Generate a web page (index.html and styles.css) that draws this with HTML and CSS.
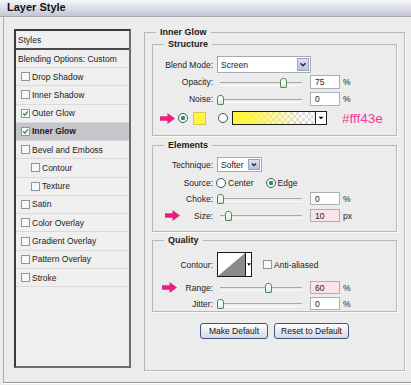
FILE: index.html
```html
<!DOCTYPE html>
<html lang="en">

<head>
    <meta charset="UTF-8">
    <meta name="viewport" content="width=device-width, initial-scale=1.0">
    <title>Layer Style</title>
    <link rel="stylesheet" href="styles.css">
</head>

<body>

    <div class="titlebar">Layer Style</div>

    <div class="dialog">

        <div class="sidebar">
            <ul class="styles-list">
                <li class="head">Styles</li>
                <li class="blend">Blending Options: Custom</li>
                <li><span class="box"></span>Drop Shadow</li>
                <li><span class="box"></span>Inner Shadow</li>
                <li><span class="box"><svg viewBox="0 0 9 9"><path d="M1.5 4.3 L3.6 6.6 L7.6 1.8" /></svg></span>Outer Glow</li>
                <li class="selected"><span class="box"><svg viewBox="0 0 9 9"><path d="M1.5 4.3 L3.6 6.6 L7.6 1.8" /></svg></span>Inner Glow</li>
                <li><span class="box"></span>Bevel and Emboss</li>
                <li class="sub"><span class="box"></span>Contour</li>
                <li class="sub"><span class="box"></span>Texture</li>
                <li><span class="box"></span>Satin</li>
                <li><span class="box"></span>Color Overlay</li>
                <li><span class="box"></span>Gradient Overlay</li>
                <li><span class="box"></span>Pattern Overlay</li>
                <li><span class="box"></span>Stroke</li>
            </ul>
        </div>

        <div class="main">
            <fieldset class="group outer">
                <legend>Inner Glow</legend>

                <!-- Structure -->
                <fieldset class="group structure">
                    <legend>Structure</legend>

                    <div class="row row-select">
                        <span class="label">Blend Mode:</span>
                        <div class="select select-wide">
                            <span class="value">Screen</span>
                            <span class="drop"><svg viewBox="0 0 11 13"><path d="M2.5 5 L5.5 8 L8.5 5" /></svg></span>
                        </div>
                    </div>

                    <div class="row row-opacity">
                        <span class="label">Opacity:</span>
                        <div class="slider"><span class="thumb" style="left: 77%"></span></div>
                        <span class="num">75</span>
                        <span class="unit">%</span>
                    </div>

                    <div class="row row-noise">
                        <span class="label">Noise:</span>
                        <div class="slider"><span class="thumb" style="left: 0%"></span></div>
                        <span class="num">0</span>
                        <span class="unit">%</span>
                    </div>

                    <div class="row row-color">
                        <svg class="arrow" viewBox="0 0 15 11"><path d="M0 3.2 H7.5 V0 L15 5.5 L7.5 11 V7.8 H0 Z" /></svg>
                        <span class="radio checked"></span>
                        <span class="swatch"></span>
                        <span class="radio radio-gap"></span>
                        <div class="gradient">
                            <span class="ramp"></span>
                            <span class="gdrop"><svg viewBox="0 0 7 4"><path d="M0.5 0.5 H6.5 L3.5 3.5 Z" /></svg></span>
                        </div>
                        <span class="hex">#fff43e</span>
                    </div>
                </fieldset>

                <!-- Elements -->
                <fieldset class="group elements">
                    <legend>Elements</legend>

                    <div class="row row-technique">
                        <span class="label">Technique:</span>
                        <div class="select select-small">
                            <span class="value">Softer</span>
                            <span class="drop"><svg viewBox="0 0 11 13"><path d="M2.5 5 L5.5 8 L8.5 5" /></svg></span>
                        </div>
                    </div>

                    <div class="row row-source">
                        <span class="label">Source:</span>
                        <span class="radio"></span>
                        <span class="opt">Center</span>
                        <span class="radio checked radio-edge"></span>
                        <span class="opt">Edge</span>
                    </div>

                    <div class="row row-choke">
                        <span class="label">Choke:</span>
                        <div class="slider"><span class="thumb" style="left: 0%"></span></div>
                        <span class="num">0</span>
                        <span class="unit">%</span>
                    </div>

                    <div class="row row-size">
                        <span class="label">
                            <svg class="arrow arrow-size" viewBox="0 0 15 11"><path d="M0 3.2 H7.5 V0 L15 5.5 L7.5 11 V7.8 H0 Z" /></svg>
                            Size:
                        </span>
                        <div class="slider"><span class="thumb" style="left: 10%"></span></div>
                        <span class="num pink">10</span>
                        <span class="unit">px</span>
                    </div>
                </fieldset>

                <!-- Quality -->
                <fieldset class="group quality">
                    <legend>Quality</legend>

                    <div class="row row-contour">
                        <span class="label">Contour:</span>
                        <div class="contour">
                            <svg class="curve" viewBox="0 0 27 23" preserveAspectRatio="none"><polygon points="0,23 27,0 27,23" /></svg>
                            <span class="cdrop"><svg viewBox="0 0 5 3"><path d="M0 0 H5 L2.5 3 Z" /></svg></span>
                        </div>
                        <span class="box box-aa"></span>
                        <span class="opt">Anti-aliased</span>
                    </div>

                    <div class="row row-range">
                        <span class="label">
                            <svg class="arrow arrow-range" viewBox="0 0 15 11"><path d="M0 3.2 H7.5 V0 L15 5.5 L7.5 11 V7.8 H0 Z" /></svg>
                            Range:
                        </span>
                        <div class="slider"><span class="thumb" style="left: 59%"></span></div>
                        <span class="num pink">60</span>
                        <span class="unit">%</span>
                    </div>

                    <div class="row row-jitter">
                        <span class="label">Jitter:</span>
                        <div class="slider"><span class="thumb" style="left: 0%"></span></div>
                        <span class="num">0</span>
                        <span class="unit">%</span>
                    </div>
                </fieldset>

                <div class="buttons">
                    <button class="btn btn-make">Make Default</button>
                    <button class="btn btn-reset">Reset to Default</button>
                </div>
            </fieldset>
        </div>

    </div>

</body>

</html>
```

FILE: styles.css
```css
* {
    box-sizing: border-box;
}

body {
    margin: 0;
    width: 411px;
    height: 385px;
    overflow: hidden;
    background-color: #ececec;
    font-family: "Liberation Sans", Arial, sans-serif;
    font-size: 8.5px;
    color: #1c1c1c;
}

.titlebar {
    height: 17px;
    padding-left: 7px;
    border-bottom: 1px solid #a6a8b4;
    background: linear-gradient(#f7f7fa, #c2c5d4);
    font-size: 11px;
    font-weight: bold;
    line-height: 15px;
    color: #111;
}

.dialog {
    display: flex;
    height: 366px;
    margin-left: 3px;
    border-left: 1px solid #a9a9a9;
    border-bottom: 1px solid #9a9a9a;
    box-shadow: 0 1px 0 #fff;
}

/* lista de estilos */
.sidebar {
    width: 140px;
    flex: none;
    padding: 12px 0 0 10px;
}

.styles-list {
    list-style: none;
    margin: 0;
    padding: 0;
    width: 117px;
    height: 339px;
    border: 2px solid;
    border-color: #3a3a3a #6c6c6c #6c6c6c #3a3a3a;
    background-color: #efefef;
}

.styles-list li {
    display: flex;
    align-items: center;
    height: 18.27px;
    padding-left: 5px;
    border-bottom: 1px solid #dadada;
    white-space: nowrap;
}

.styles-list .head {
    height: 19px;
    padding-left: 2px;
    border-bottom: 2px solid #4a4a4a;
}

.styles-list .blend {
    height: 18px;
    padding-left: 2px;
}

.styles-list .sub {
    padding-left: 15px;
}

.styles-list .selected {
    background-color: #c5c5cd;
    font-weight: bold;
}

.box {
    width: 9px;
    height: 9px;
    margin-right: 2px;
    flex: none;
    border: 1px solid #8b96a4;
    background-color: #f8f8f8;
}

.box svg {
    display: block;
    width: 7px;
    height: 7px;
}

.box path {
    fill: none;
    stroke: #27992a;
    stroke-width: 1.7;
}

/* painel principal */
.main {
    width: 261px;
    flex: none;
    padding-top: 10px;
}

.group {
    margin: 0;
    padding: 0 7px;
    min-width: 0;
    border: 1px solid #b7b7b7;
    box-shadow: 1px 1px 0 #fbfbfb;
}

.group legend {
    margin-left: 4px;
    padding: 0 4px;
    font-size: 9px;
    font-weight: bold;
    line-height: 11px;
    color: #1a1a1a;
}

.outer {
    padding-bottom: 31px;
}

.structure {
    margin-top: 1px;
    padding-top: 6px;
    padding-bottom: 10px;
}

.elements {
    margin-top: 4px;
    padding-top: 6px;
    padding-bottom: 9px;
}

.quality {
    margin-top: 3px;
    padding-top: 6px;
    padding-bottom: 1px;
}

.row {
    display: flex;
    align-items: center;
    height: 13px;
    white-space: nowrap;
}

.label {
    display: flex;
    align-items: center;
    justify-content: flex-end;
    width: 53px;
    margin-right: 4px;
    flex: none;
}

.row-select {
    height: 17px;
}

.row-opacity {
    height: 14px;
    margin-top: 2px;
}

.row-noise {
    height: 14px;
    margin-top: 3px;
}

.row-color {
    height: 14px;
    margin-top: 5px;
}

.row-technique {
    height: 15px;
}

.row-source {
    height: 12px;
    margin-top: 5px;
}

.row-choke {
    margin-top: 3px;
}

.row-size {
    margin-top: 4px;
}

.row-contour {
    height: 25px;
}

.row-range {
    margin-top: 4px;
}

.row-jitter {
    margin-top: 3px;
}

/* selects */
.select {
    display: flex;
    height: 100%;
    border: 1px solid #a4abb4;
    background-color: #fff;
}

.select-wide {
    width: 94px;
}

.select-small {
    width: 45px;
}

.select .value {
    flex: 1;
    padding-left: 3px;
    align-self: center;
}

.select .drop {
    width: 12px;
    margin: 1px;
    border: 1px solid #9aa3b8;
    background: linear-gradient(#dde2ee, #bcc4d8);
}

.select .drop svg {
    display: block;
    width: 100%;
    height: 100%;
}

.select .drop path {
    fill: none;
    stroke: #1e2b48;
    stroke-width: 1.8;
}

/* sliders */
.slider {
    position: relative;
    width: 82px;
    height: 11px;
    margin-left: 3px;
    flex: none;
}

.slider::before {
    content: "";
    position: absolute;
    left: 0;
    right: 0;
    top: 5px;
    height: 2px;
    border-top: 1px solid #a6a6a6;
    border-bottom: 1px solid #fdfdfd;
}

.thumb {
    position: absolute;
    top: 1px;
    width: 7px;
    height: 10px;
    margin-left: -3.5px;
    border: 1px solid #4f8d58;
    border-radius: 3px 3px 1px 1px;
    background: linear-gradient(#fbfbfb 50%, #cfe5cf);
}

.num {
    width: 30px;
    height: 100%;
    margin-left: 8px;
    padding-left: 4px;
    flex: none;
    border: 1px solid #a9b0b8;
    background-color: #fff;
    display: flex;
    align-items: center;
}

.num.pink {
    background-color: #fbe3ee;
}

.unit {
    margin-left: 3px;
}

/* cores */
.arrow {
    width: 15px;
    height: 11px;
    flex: none;
}

.arrow path {
    fill: #ec1f7f;
}

.label .arrow {
    margin-right: auto;
}

.arrow-size {
    margin-left: 5px;
}

.arrow-range {
    margin-left: 2px;
}

.radio {
    width: 10px;
    height: 10px;
    flex: none;
    border: 1px solid #3d5670;
    border-radius: 50%;
    background: radial-gradient(#fff 55%, #e2e6ea);
}

.radio.checked {
    background: radial-gradient(#2e9d34 0 2px, #fff 2.5px, #e2e6ea);
}

.row-color .radio.checked {
    margin-left: 3px;
}

.swatch {
    width: 13px;
    height: 13px;
    margin-left: 5px;
    flex: none;
    border: 1px solid #d6cb4a;
    background-color: #fff43e;
}

.radio-gap {
    margin-left: 12px;
}

.gradient {
    display: flex;
    width: 95px;
    height: 14px;
    margin-left: 4px;
    flex: none;
    border: 1px solid #1e1e1e;
}

.ramp {
    flex: 1;
    background:
        linear-gradient(to right, #fff43e 15%, rgba(255, 244, 62, 0) 85%),
        repeating-conic-gradient(#dcdcdc 0 25%, #fff 0 50%) 0 0 / 6px 6px;
}

.gdrop {
    width: 11px;
    border-left: 1px solid #1e1e1e;
    background-color: #fff;
    display: flex;
    align-items: center;
    justify-content: center;
}

.gdrop svg {
    width: 6px;
    height: 4px;
}

.hex {
    margin-left: 15px;
    font-size: 13.5px;
    color: #ec3c96;
}

.opt {
    margin-left: 2px;
}

.row-source .radio {
    margin-left: -1px;
}

.row-source .radio-edge {
    margin-left: 12px;
}

/* contour */
.contour {
    display: flex;
    width: 35px;
    height: 25px;
    flex: none;
    border: 1px solid #1a1a1a;
    background-color: #fff;
}

.curve {
    width: 27px;
    height: 23px;
    display: block;
}

.curve polygon {
    fill: #8a8a8a;
}

.cdrop {
    flex: 1;
    border-left: 1px solid #1a1a1a;
    display: flex;
    align-items: center;
    justify-content: center;
}

.cdrop svg {
    width: 4px;
    height: 3px;
}

.box-aa {
    margin-left: 11px;
    margin-right: 0;
}

/* botoes */
.buttons {
    display: flex;
    justify-content: center;
    gap: 6px;
    margin-top: 11px;
}

.btn {
    height: 16px;
    padding: 0;
    border: 1px solid #3f5679;
    border-radius: 3px;
    background: linear-gradient(#ffffff, #d5d8e5);
    font-family: inherit;
    font-size: 8.5px;
    color: #111;
}

.btn-make {
    width: 68px;
}

.btn-reset {
    width: 75px;
}
```
